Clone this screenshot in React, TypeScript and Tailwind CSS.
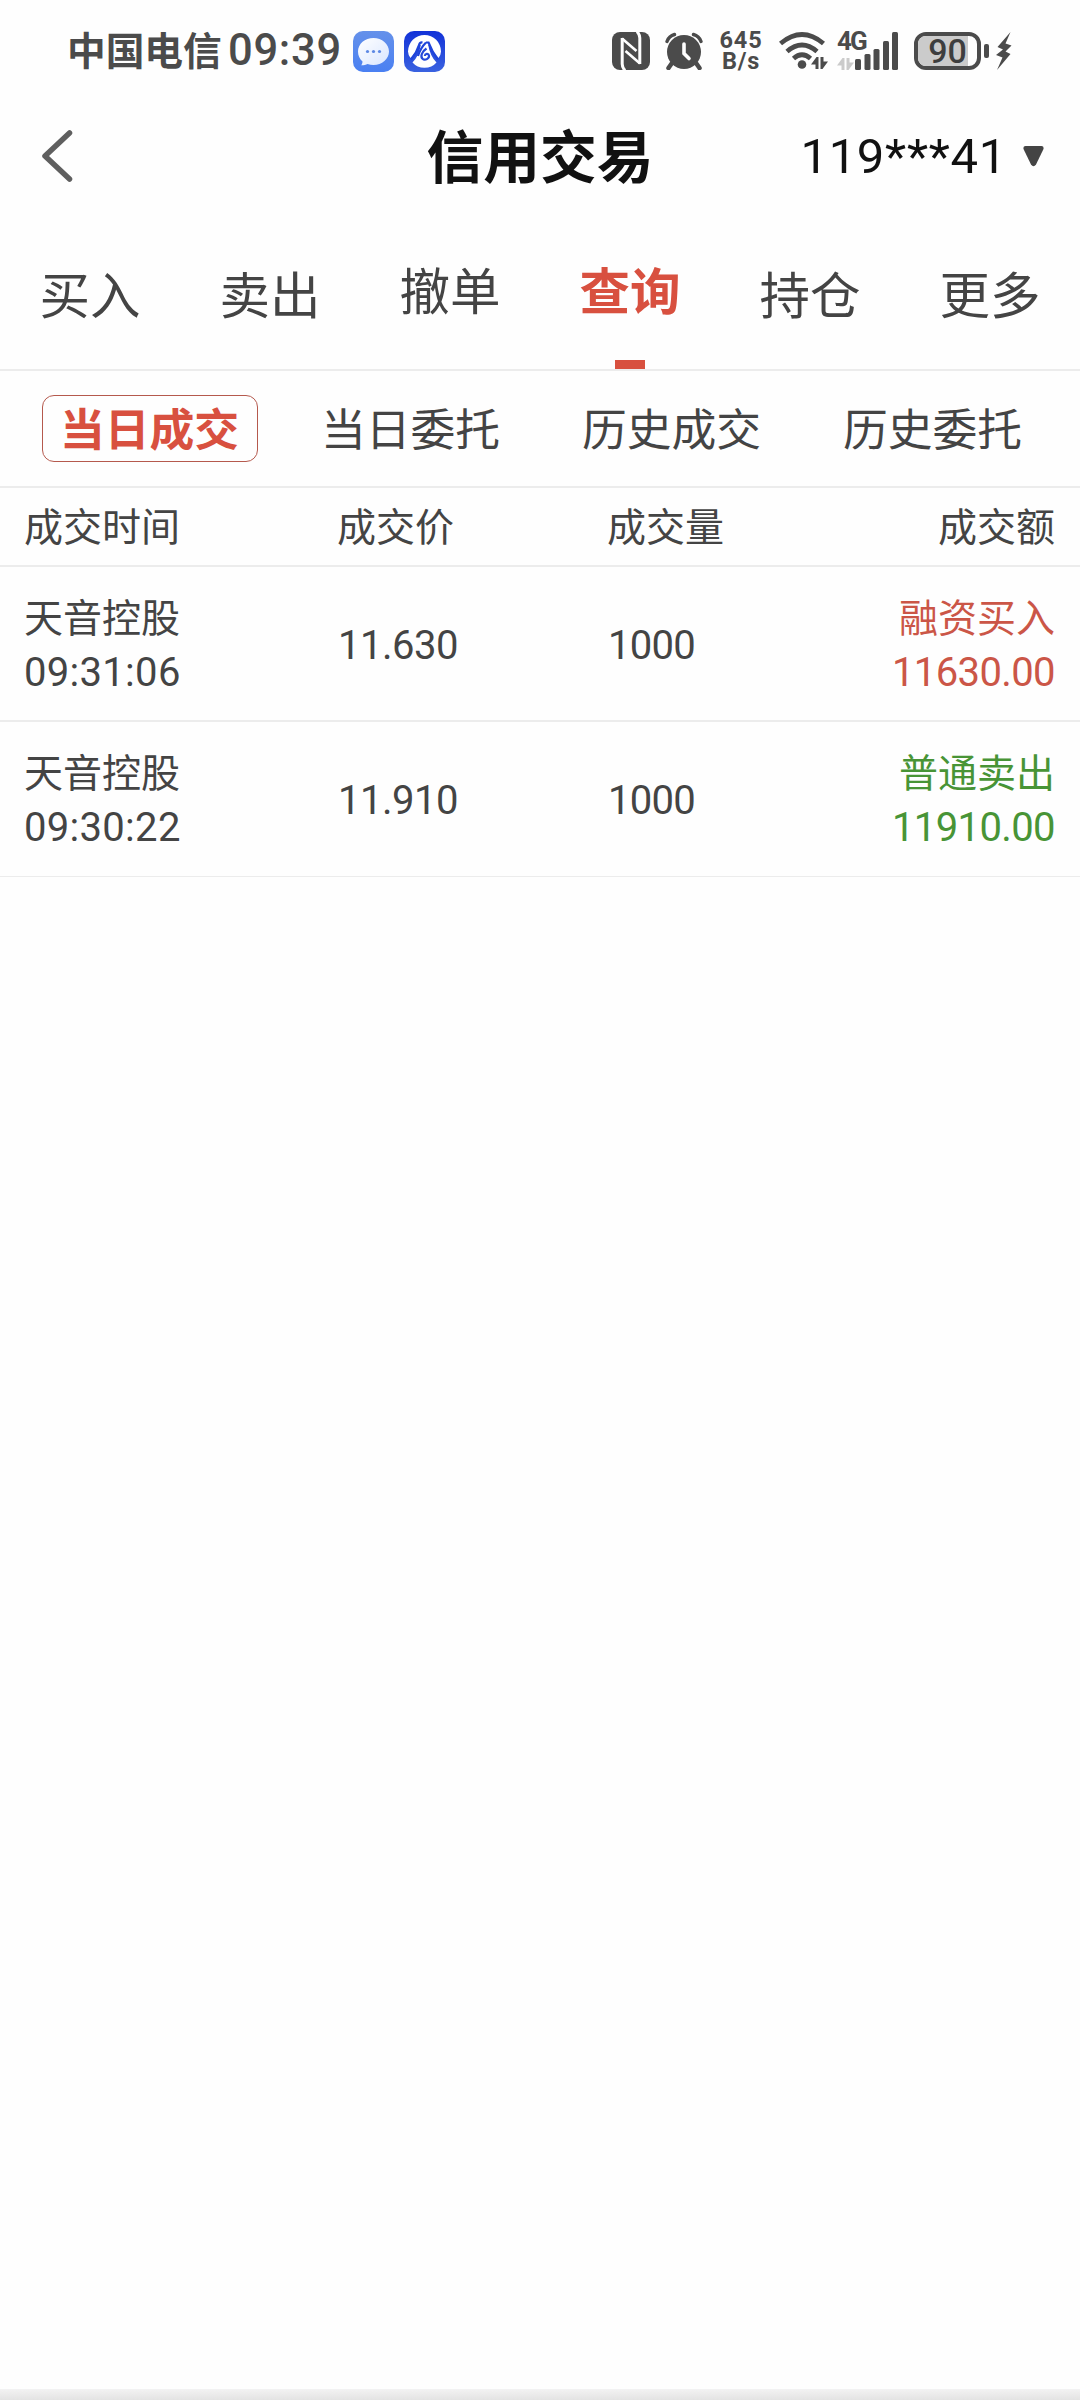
import React from 'react';

const TABS = [
    { label: '买入' },
    { label: '卖出' },
    { label: '撤单', raised: true },
    { label: '查询', raised: true, active: true },
    { label: '持仓' },
    { label: '更多' },
];

const SUB_TABS = ['当日成交', '当日委托', '历史成交', '历史委托'];

interface Trade { name: string; time: string; price: string; volume: string; side: string; amount: string; buy: boolean }

const TRADES: Trade[] = [
    { name: '天音控股', time: '09:31:06', price: '11.630', volume: '1000', side: '融资买入', amount: '11630.00', buy: true },
    { name: '天音控股', time: '09:30:22', price: '11.910', volume: '1000', side: '普通卖出', amount: '11910.00', buy: false },
];

const MessageIcon = () => (
    <svg width="41" height="41" viewBox="0 0 41 41">
        <defs>
            <linearGradient id="msgBg" x1="0" y1="0" x2="0" y2="1">
                <stop offset="0" stopColor="#6591ea" />
                <stop offset="1" stopColor="#4a80f2" />
            </linearGradient>
            <linearGradient id="msgBubble" x1="0" y1="0" x2="1" y2="1">
                <stop offset="0" stopColor="#ffffff" />
                <stop offset="1" stopColor="#d9e6ff" />
            </linearGradient>
        </defs>
        <rect width="41" height="41" rx="10" fill="url(#msgBg)" />
        <path d="M20.5 7C12 7 5 12.8 5 20.5C5 24.5 6.7 28 9.5 30.5C9.5 32 9 33.2 8.2 34.3C11 34.3 13 33.5 14.5 32.9C16.4 33.6 18.4 34 20.5 34C29 34 36 28 36 20.5S29 7 20.5 7Z" fill="url(#msgBubble)" />
        <circle cx="14.5" cy="20.5" r="1.6" fill="#5c88e4" />
        <circle cx="20.5" cy="20.5" r="1.6" fill="#5c88e4" />
        <circle cx="26.5" cy="20.5" r="1.6" fill="#5c88e4" />
    </svg>
);

const BankIcon = () => (
    <svg width="41" height="41" viewBox="0 0 41 41">
        <defs>
            <linearGradient id="bankBg" x1="0" y1="0" x2="0" y2="1">
                <stop offset="0" stopColor="#1232d8" />
                <stop offset="1" stopColor="#3a62e0" />
            </linearGradient>
        </defs>
        <rect width="41" height="41" rx="10" fill="url(#bankBg)" />
        <path d="M6.5 27Q4 23.5 4 20.5A16.5 16.5 0 0 1 37 20.5Q37 23.5 34.5 27Q29 22 26 14H15Q12 22 6.5 27Z" fill="#fff" />
        <path d="M8.5 31.5Q15 25 17 13H24Q26 25 32.5 31.5Q28 36.8 20.5 36.8T8.5 31.5Z" fill="#fff" />
        <path d="M18.5 11.5Q16 11 15 14Q12.5 22 7 28.5" fill="none" stroke="#1f44da" strokeWidth="2.2" />
        <path d="M22 11.5H24.5Q28 21 34 28.5M22 11.5Q16.5 17 14 25" fill="none" stroke="#1f44da" strokeWidth="2.2" />
        <path d="M22.5 17.5C18 20.5 16 25.5 18.5 27.8C21 30 25.5 27.5 25 24.5C24.5 22 21 22.5 20.8 25" fill="none" stroke="#2549da" strokeWidth="2.2" />
    </svg>
);

const NfcIcon = () => (
    <svg width="38" height="38" viewBox="0 0 38 38">
        <rect width="38" height="38" rx="8" fill="#4b4b4b" />
        <g fill="none" stroke="#fefefe">
            <path d="M10.2 6V32Q10.2 35.5 13 38.5" strokeWidth="3" />
            <path d="M27.8 32V6Q27.8 2.5 25 -0.5" strokeWidth="3" />
            <path d="M10 6.5L24.5 19M28 31.5L13.5 19" strokeWidth="2.6" />
        </g>
    </svg>
);

const AlarmIcon = () => (
    <svg width="38" height="38" viewBox="0 0 38 38">
        <circle cx="19" cy="20" r="17" fill="#4b4b4b" />
        <path d="M2 9.5Q4 4 9.5 2.5M28.5 2.5Q34 4 36 9.5" fill="none" stroke="#4b4b4b" strokeWidth="3.4" strokeLinecap="round" />
        <path d="M7 31L3.5 36M31 31L34.5 36" stroke="#4b4b4b" strokeWidth="4.5" strokeLinecap="round" />
        <path d="M19 12V21.5L24 26.5" fill="none" stroke="#fefefe" strokeWidth="3.6" strokeLinecap="round" />
    </svg>
);

const DataArrows = ({ color }: { color: string }) => (
    <svg width="17" height="12" viewBox="0 0 17 12">
        <path d="M7.5 12H4.5V7.5H0L5.5 0H7.5ZM9.5 0H12.5V4.5H17L11.5 12H9.5Z" fill={color} />
    </svg>
);

const WifiIcon = () => (
    <svg width="46" height="38" viewBox="0 0 46 38" fill="none" stroke="#4b4b4b" strokeWidth="4.8">
        <path d="M1.5 11.5Q23 -6.5 44.5 11.5" />
        <path d="M8 19.5Q23 6.5 38 19.5" />
        <path d="M14.5 26.5Q23 19 31.5 26.5" />
        <circle cx="23" cy="32.5" r="4.3" fill="#4b4b4b" stroke="none" />
    </svg>
);

const SignalBars = () => (
    <svg width="45" height="38" viewBox="0 0 45 38" fill="#4b4b4b">
        <rect x="0" y="27" width="6" height="11" rx="1.5" />
        <rect x="9.5" y="22" width="6" height="16" rx="1.5" />
        <rect x="18.5" y="17" width="6" height="21" rx="1.5" />
        <rect x="28" y="9" width="6" height="29" rx="1.5" />
        <rect x="37" y="0" width="6" height="38" rx="1.5" />
    </svg>
);

const StatusBar = () => (
    <div className="flex h-[104px] items-center pb-[2px] pl-[67px] text-[#4b4b4b]">
        <span className="w-[161px] pb-[6px] font-['Noto_Sans_CJK_SC'] text-[38.7px] leading-[50px] font-bold">中国电信</span>
        <span className="w-[125px] font-['Roboto'] text-[43.5px] leading-[50px] font-medium tracking-[0.7px]">09:39</span>
        <MessageIcon />
        <div className="w-[10px]" />
        <BankIcon />
        <div className="ml-[167px] flex h-[38px] items-start font-['Roboto']">
            <NfcIcon />
            <div className="w-[15px]" />
            <AlarmIcon />
            <div className="-mt-[2px] ml-[14px] w-[48px] text-center text-[23.5px] leading-[21px] font-bold tracking-[0.8px]">
                645<br />B/s
            </div>
            <div className="relative ml-[14px] w-[58px]">
                <WifiIcon />
                <div className="absolute top-[25px] left-[32px]">
                    <DataArrows color="#4b4b4b" />
                </div>
            </div>
            <div className="relative h-[38px] w-[63px]">
                <span className="absolute -top-[4px] left-0 text-[26px] leading-[26px] font-bold tracking-[-2px]">4G</span>
                <div className="absolute top-[26px] left-0">
                    <DataArrows color="#cbcbcb" />
                </div>
                <div className="absolute top-0 left-[18px]">
                    <SignalBars />
                </div>
            </div>
            <div className="relative ml-[14px] flex h-[38px] w-[67px] items-center justify-center rounded-[12px] border-4 border-[#4b4b4b]">
                <div className="absolute inset-y-0 left-0 w-[50px] rounded-l-[8px] bg-[#cbcbcb]" />
                <span className="relative text-[34px] leading-[34px] font-medium text-[#3e3e3e]">90</span>
            </div>
            <div className="mt-[12px] ml-[3px] h-[14px] w-[5px] rounded-[2px] bg-[#4b4b4b]" />
            <svg className="ml-[7px]" width="16" height="38" viewBox="0 0 16 38">
                <path d="M14.5 0L1.5 15L7 17.5L0 23L6.5 25.5L1 38L14.5 22L9.5 19.5L15.5 13.5L9.5 11.5Z" fill="#4b4b4b" />
            </svg>
        </div>
    </div>
);

const Header = () => (
    <div className="grid h-[104px] grid-cols-[1fr_auto_1fr] items-center">
        <svg className="ml-[41px]" width="32" height="52" viewBox="0 0 32 52">
            <path d="M28.5 3L4 26L28.5 49" fill="none" stroke="#5f5f5f" strokeWidth="5.5" strokeLinecap="round" strokeLinejoin="round" />
        </svg>
        <h1 className="pb-[6px] text-[56.8px] leading-[80px] font-bold text-[#111]">信用交易</h1>
        <div className="flex items-center justify-end pr-[36px]">
            <span className="pt-[1px] font-['Roboto'] text-[49px] leading-[60px] tracking-[0.7px] text-[#111]">119***41</span>
            <svg className="ml-[16px]" width="21" height="21" viewBox="0 0 21 21">
                <path d="M2.5 0H18.5Q21 0 20.5 3L13 18.5Q10.5 22 8 18.5L0.5 3Q0 0 2.5 0Z" fill="#444" />
            </svg>
        </div>
    </div>
);

export default function App() {
    return (
        <div className="flex h-[2400px] w-[1080px] flex-col overflow-hidden bg-[#fefefe] font-['Noto_Sans_CJK_SC',sans-serif] text-[#444]">
            <StatusBar />
            <Header />

            {/* Main tabs */}
            <div className="grid h-[163px] grid-cols-6 border-b-2 border-[#ececec] text-[50.5px] leading-[72px]">
                {TABS.map(t => (
                    <div key={t.label} className="flex flex-col items-center justify-between">
                        <span className={`${t.raised ? 'mt-[44px]' : 'mt-[48px]'} ${t.active ? 'font-bold text-[#d8503f]' : ''}`}>{t.label}</span>
                        {t.active && <div className="h-[9px] w-[30px] bg-[#d8503f]" />}
                    </div>
                ))}
            </div>

            {/* Query sub tabs */}
            <div className="grid h-[117px] grid-cols-[repeat(4,261px)] items-center justify-items-center border-b-2 border-[#ececec] pl-[19px] text-[44.8px]">
                {SUB_TABS.map((label, i) => (
                    <div
                        key={label}
                        className={`flex h-[67px] w-[216px] items-center justify-center rounded-[12px] pb-[4px] leading-[61px] ${i === 0 ? 'border border-[#b5594d] font-bold text-[#d8503f]' : ''}`}
                    >
                        {label}
                    </div>
                ))}
            </div>

            {/* Table head */}
            <div className="grid h-[79px] grid-cols-[313px_270px_1fr_auto] items-center border-b-2 border-[#ececec] pr-[25px] pb-[5px] pl-[24px] text-[39px] leading-[56px]">
                <span>成交时间</span>
                <span>成交价</span>
                <span>成交量</span>
                <span>成交额</span>
            </div>

            {TRADES.map((t, i) => (
                <div
                    key={t.time}
                    className={`grid h-[155px] grid-cols-[314px_270px_1fr_auto] items-center border-[#ececec] pt-[4px] pr-[25px] pl-[24px] font-['Roboto','Noto_Sans_CJK_SC',sans-serif] text-[39px] ${i === TRADES.length - 1 ? 'border-b' : 'border-b-2'}`}
                >
                    <div className="leading-[53px]">
                        <div>{t.name}</div>
                        <div className="text-[40px] tracking-[0.3px]">{t.time}</div>
                    </div>
                    <span className="text-[40px] tracking-[-0.5px]">{t.price}</span>
                    <span className="text-[40px] tracking-[-0.7px]">{t.volume}</span>
                    <div className={`text-right leading-[53px] ${t.buy ? 'text-[#cb5647]' : 'text-[#489436]'}`}>
                        <div>{t.side}</div>
                        <div className="text-[40px] tracking-[-0.6px]">{t.amount}</div>
                    </div>
                </div>
            ))}

            <div className="mt-auto h-[11px] bg-linear-to-b from-[#f3f3f3] to-[#e3e3e3]" />
        </div>
    );
}
